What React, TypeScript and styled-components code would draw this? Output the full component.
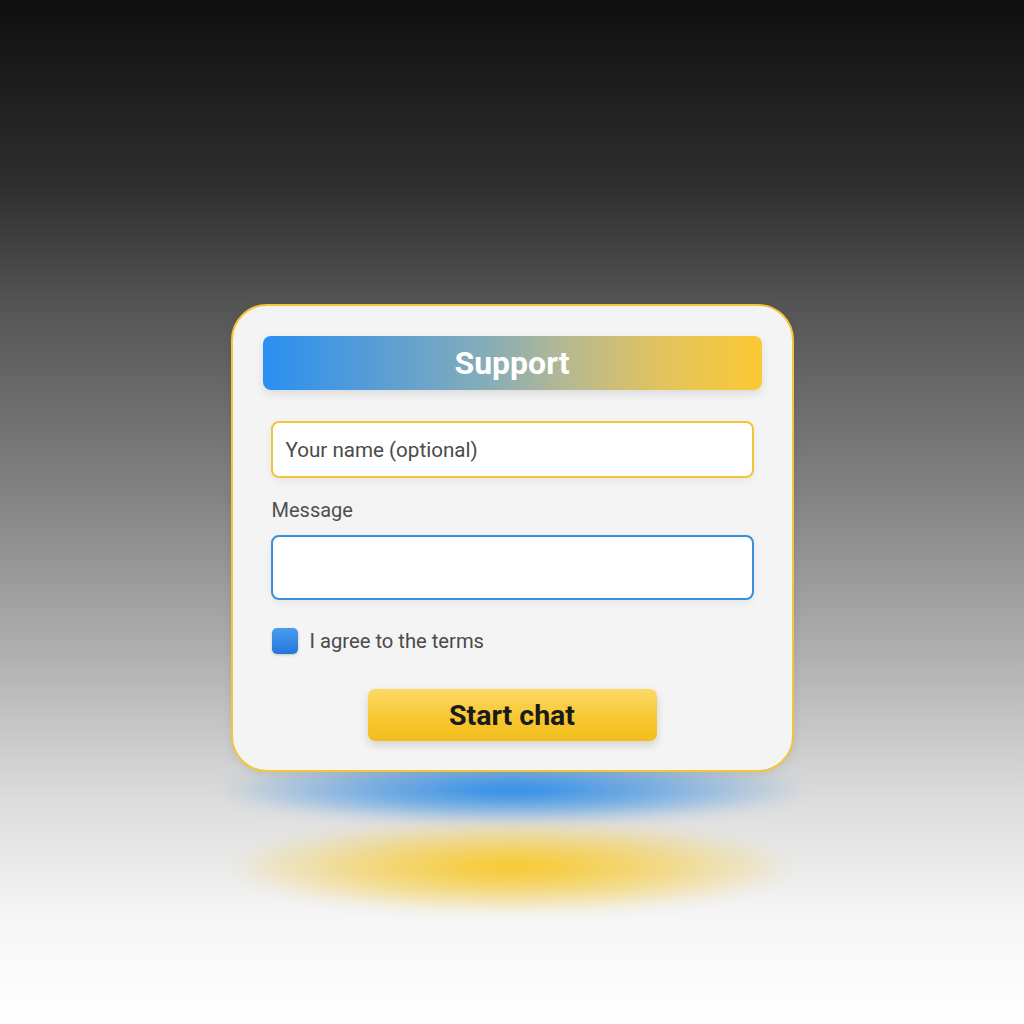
import React from 'react';
import styled, { createGlobalStyle } from 'styled-components';

const GlobalStyle = createGlobalStyle`
  html, body {
    margin: 0;
    padding: 0;
  }
  body {
    font-family: Roboto, "Noto Sans", "Liberation Sans", sans-serif;
  }
`;

const Page = styled.div`
  width: 1024px;
  height: 1024px;
  overflow: hidden;
  display: flex;
  flex-direction: column;
  align-items: center;
  padding-top: 304px;
  box-sizing: border-box;
  background: linear-gradient(
    180deg,
    #0f0f0f 0%,
    #2e2e2e 18%,
    #555555 30%,
    #828282 48%,
    #b0b0b0 64%,
    #dcdcdc 78%,
    #f6f6f6 90%,
    #ffffff 100%
  );
`;

const Card = styled.div`
  position: relative;
  z-index: 1;
  width: 563px;
  height: 468px;
  box-sizing: border-box;
  background: #f4f4f4;
  border: 2.5px solid #f3c537;
  border-radius: 36px;
  padding: 30px 30px 0 30px;
  display: flex;
  flex-direction: column;
  box-shadow: 0 3px 10px rgba(0, 0, 0, 0.08);
`;

const Header = styled.div`
  height: 54px;
  border-radius: 8px;
  background: linear-gradient(90deg, #2a8ff2 0%, #5d9fd2 25%, #86adb8 45%, #b9b98e 62%, #e2c35e 80%, #fbc934 100%);
  display: flex;
  align-items: center;
  justify-content: center;
  color: #ffffff;
  font-size: 32px;
  font-weight: 700;
  box-shadow: 0 4px 10px rgba(0, 0, 0, 0.1);
`;

const Fields = styled.div`
  display: flex;
  flex-direction: column;
  padding: 0 8px;
  margin-top: 31px;
`;

const Input = styled.div<{ $accent: string; $height: number }>`
  height: ${(p) => p.$height}px;
  box-sizing: border-box;
  background: #ffffff;
  border: 2px solid ${(p) => p.$accent};
  border-radius: 8px;
  display: flex;
  align-items: center;
  padding: 0 13px;
  font-size: 20.6px;
  color: #4a4a4a;
  box-shadow: 0 3px 8px rgba(0, 0, 0, 0.06);
`;

const Label = styled.div`
  font-size: 20px;
  color: #4f4f4f;
  margin: 20px 0 13px 1px;
`;

const CheckRow = styled.label`
  display: flex;
  align-items: center;
  gap: 12px;
  margin-top: 28px;
  font-size: 20.2px;
  color: #4a4a4a;
`;

const Box = styled.span`
  width: 26px;
  height: 26px;
  border-radius: 5px;
  margin-left: 1px;
  background: linear-gradient(180deg, #4a9cf0 0%, #2376d8 100%);
  box-shadow: 0 1px 3px rgba(0, 0, 0, 0.2);
`;

const ButtonRow = styled.div`
  display: flex;
  justify-content: center;
  margin-top: 35px;
`;

const StartButton = styled.button`
  width: 289px;
  height: 52px;
  border: none;
  border-radius: 7px;
  background: linear-gradient(180deg, #fcd968 0%, #f7c830 55%, #f2bd1c 100%);
  color: #1a1a1a;
  font-family: inherit;
  font-size: 28.5px;
  font-weight: 700;
  box-shadow: 0 4px 10px rgba(0, 0, 0, 0.14);
  cursor: pointer;
`;

const Glow = styled.div<{ $color: string; $w: number; $h: number; $mt: number }>`
  width: ${(p) => p.$w}px;
  height: ${(p) => p.$h}px;
  margin-top: ${(p) => p.$mt}px;
  background: radial-gradient(ellipse at center, ${(p) => p.$color} 0%, ${(p) => p.$color.replace('1)', '0.55)')} 35%, ${(p) => p.$color.replace('1)', '0)')} 70%);
  filter: blur(6px);
`;

export default function App() {
  return (
    <>
      <GlobalStyle />
      <Page>
        <Card>
          <Header>Support</Header>
          <Fields>
            <Input $accent="#f1c43c" $height={57}>Your name (optional)</Input>
            <Label>Message</Label>
            <Input $accent="#3a8fdc" $height={65} />
            <CheckRow>
              <Box />
              I agree to the terms
            </CheckRow>
          </Fields>
          <ButtonRow>
            <StartButton>Start chat</StartButton>
          </ButtonRow>
        </Card>
        <Glow $color="rgba(40, 138, 232, 1)" $w={600} $h={70} $mt={-17} />
        <Glow $color="rgba(248, 200, 40, 1)" $w={580} $h={96} $mt={-6} />
      </Page>
    </>
  );
}
